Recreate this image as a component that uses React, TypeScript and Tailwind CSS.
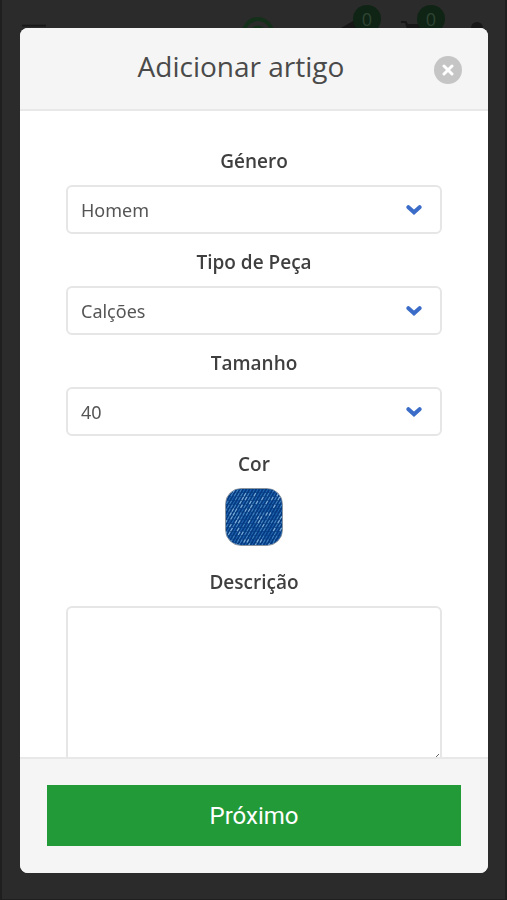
import React, { useState } from "react";

const GENDERS = ["Homem", "Mulher", "Criança"];
const TYPES = ["Calções", "Calças", "Camisa"];
const SIZES = ["38", "40", "42"];

interface SelectFieldProps {
  id: string;
  label: string;
  options: string[];
  value: string;
  onChange: (value: string) => void;
}

const labelStyle = "block text-center text-[19px] leading-7 font-semibold text-[#3f3f3f]";

const SelectField = ({ id, label, options, value, onChange }: SelectFieldProps) => {
  return (
    <div className="flex flex-col gap-[10px]">
      <label htmlFor={id} className={labelStyle}>
        {label}
      </label>
      <div className="relative">
        <select
          id={id}
          value={value}
          onChange={(e) => onChange(e.target.value)}
          className="w-full h-[49px] appearance-none rounded-md border-2 border-[#e6e6e6] bg-white pl-[13px] pr-12 font-['Noto_Sans',sans-serif] text-lg text-[#555555]"
        >
          {options.map((option) => (
            <option key={option}>{option}</option>
          ))}
        </select>
        <svg
          viewBox="0 0 16 10"
          className="pointer-events-none absolute right-5 top-5 h-[10px] w-4"
          fill="none"
          stroke="#3a6cc8"
          strokeWidth="4"
          strokeLinecap="round"
        >
          <path d="M2.4 2.2 8 7.2l5.6-5" />
        </svg>
      </div>
    </div>
  );
};

const Denim = () => {
  const threads = [];
  for (let row = 0; row < 15; row++) {
    for (let col = -8; col < 20; col++) {
      const seed = (row * row * 7 + col * col * 5 + row * 13 + col * 29 + row * col * 3 + 9999) % 19;
      const x = col * 3.4 + (15 - row) * 2.3;
      threads.push(
        <path
          key={`${row}-${col}`}
          d={`M${x} ${row * 4 + 3.6}l2-3.4`}
          stroke={seed > 14 ? "#79aedb" : seed > 7 ? "#3f83c2" : "#1f64b0"}
          strokeWidth={seed > 14 ? 1.3 : 1.2}
        />
      );
    }
  }
  return (
    <svg viewBox="0 0 58 58" className="h-full w-full">
      <rect width="58" height="58" fill="#053a80" />
      {threads}
    </svg>
  );
};

const PageHeader = () => {
  return (
    <header className="flex h-[66px] items-center justify-between pl-5 pr-4 text-[#171717]">
      <svg viewBox="0 0 26 20" className="h-5 w-6" stroke="currentColor" strokeWidth="2">
        <path d="M0 2h26M0 10h26M0 18h26" />
      </svg>
      <svg viewBox="0 0 32 32" className="ml-32 h-8 w-8" fill="none" stroke="#14301a">
        <circle cx="16" cy="16" r="14" strokeWidth="4" />
        <circle cx="16" cy="16" r="6" strokeWidth="3" />
      </svg>
      <div className="flex items-start gap-9">
        <div className="relative">
          <svg viewBox="0 0 24 24" className="h-6 w-6" fill="currentColor">
            <path d="M12 0 L24 9v14H0V7z" />
          </svg>
          <span className="absolute -top-4 left-3 flex h-7 w-7 items-center justify-center rounded-full bg-[#0f2414] text-lg text-[#2f4534]">
            0
          </span>
        </div>
        <div className="relative">
          <svg viewBox="0 0 24 24" className="h-6 w-6" fill="currentColor">
            <path d="M0 -2h4l3 5h17l-3 11H8L4 2H0z" />
          </svg>
          <span className="absolute -top-4 left-4 flex h-7 w-7 items-center justify-center rounded-full bg-[#0f2414] text-lg text-[#2f4534]">
            0
          </span>
        </div>
        <svg viewBox="0 0 24 24" className="ml-1 h-6 w-6" fill="currentColor">
          <circle cx="12" cy="7" r="6" />
          <path d="M1 24a11 10 0 0 1 22 0z" />
        </svg>
      </div>
    </header>
  );
};

const App = () => {
  const [gender, setGender] = useState("Homem");
  const [type, setType] = useState("Calções");
  const [size, setSize] = useState("40");
  const [description, setDescription] = useState("");

  return (
    <main className="min-h-screen border-x-2 border-b border-[#1f1f1f] bg-[#2b2b2b] font-['Open_Sans',sans-serif]">
      <PageHeader />
      <div className="fixed inset-0 flex pl-5 pr-[19px] pt-7 pb-[27px]">
        <form
          role="dialog"
          aria-labelledby="modal-title"
          onSubmit={(e) => e.preventDefault()}
          className="flex w-full flex-col overflow-hidden rounded-lg bg-white"
        >
          <div className="relative shrink-0 border-b-2 border-[#e8e8e8] bg-[#f5f5f5] pt-[18px] pr-[26px] pb-[22px]">
            <h1
              id="modal-title"
              className="text-center text-[28px] leading-[41px] text-[#4a4a4a]"
            >
              Adicionar artigo
            </h1>
            <button
              type="button"
              aria-label="Fechar"
              className="absolute right-[26px] top-7 h-7 w-7 rounded-full bg-[#c5c5c5] p-2"
            >
              <svg
                viewBox="0 0 12 12"
                className="h-3 w-3"
                stroke="#ffffff"
                strokeWidth="3"
                strokeLinecap="round"
              >
                <path d="M2 2l8 8M10 2l-8 8" />
              </svg>
            </button>
          </div>
          <div className="flex min-h-0 flex-1 flex-col gap-[14px] overflow-y-auto px-[46px] pt-9 [scrollbar-width:none]">
            <SelectField id="gender" label="Género" options={GENDERS} value={gender} onChange={setGender} />
            <SelectField id="type" label="Tipo de Peça" options={TYPES} value={type} onChange={setType} />
            <SelectField id="size" label="Tamanho" options={SIZES} value={size} onChange={setSize} />
            <div className="flex flex-col items-center gap-[10px] pb-2">
              <span className={labelStyle}>Cor</span>
              <button
                type="button"
                aria-label="Ganga"
                className="h-[58px] w-[58px] overflow-hidden rounded-2xl border border-[#8a949e]"
              >
                <Denim />
              </button>
            </div>
            <div className="flex flex-col gap-[10px] pb-9">
              <label htmlFor="description" className={labelStyle}>
                Descrição
              </label>
              <textarea
                id="description"
                value={description}
                onChange={(e) => setDescription(e.target.value)}
                className="h-[158px] w-full shrink-0 rounded-md border-2 border-[#e6e6e6] p-3 text-lg text-[#555555]"
              />
            </div>
          </div>
          <div className="shrink-0 border-t-2 border-[#e8e8e8] bg-[#f5f5f5] px-[27px] pt-[26px] pb-[27px]">
            <button
              type="submit"
              className="h-[61px] w-full bg-[#229a38] font-['Roboto',sans-serif] text-2xl text-white"
            >
              Próximo
            </button>
          </div>
        </form>
      </div>
    </main>
  );
};

export default App;
